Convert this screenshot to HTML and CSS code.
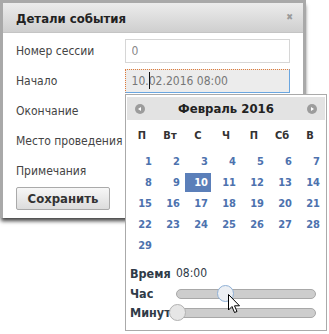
FILE: index.html
```html
<!DOCTYPE html>
<html lang="ru">
<head>
    <meta charset="UTF-8">
    <title>Детали события</title>
    <link rel="stylesheet" href="styles.css">
</head>
<body>
    <div class="page">
        <div class="dialog">
            <div class="dialog-title">
                <span>Детали события</span>
                <span class="close">&#10006;</span>
            </div>
            <div class="dialog-body">
                <div class="row"><label>Номер сессии</label><input type="text" value="0"></div>
                <div class="row"><label>Начало</label><input type="text" class="focused" value="10.02.2016 08:00"><span class="caret"></span></div>
                <div class="row"><label>Окончание</label><input type="text"></div>
                <div class="row"><label>Место проведения</label><input type="text"></div>
                <div class="row"><label>Примечания</label><input type="text"></div>
                <button class="save">Сохранить</button>
            </div>
        </div>

        <div class="datepicker">
            <div class="dp-header">
                <span class="dp-nav"></span>
                <span class="dp-title">Февраль 2016</span>
                <span class="dp-nav next"></span>
            </div>
            <table class="dp-table">
                <thead>
                    <tr><th>П</th><th>Вт</th><th>С</th><th>Ч</th><th>П</th><th>Сб</th><th>В</th></tr>
                </thead>
                <tbody>
                    <tr><td><a>1</a></td><td><a>2</a></td><td><a>3</a></td><td><a>4</a></td><td><a>5</a></td><td><a>6</a></td><td><a>7</a></td></tr>
                    <tr><td><a>8</a></td><td><a>9</a></td><td><a class="active">10</a></td><td><a>11</a></td><td><a>12</a></td><td><a>13</a></td><td><a>14</a></td></tr>
                    <tr><td><a>15</a></td><td><a>16</a></td><td><a>17</a></td><td><a>18</a></td><td><a>19</a></td><td><a>20</a></td><td><a>21</a></td></tr>
                    <tr><td><a>22</a></td><td><a>23</a></td><td><a>24</a></td><td><a>25</a></td><td><a>26</a></td><td><a>27</a></td><td><a>28</a></td></tr>
                    <tr><td><a>29</a></td><td></td><td></td><td></td><td></td><td></td><td></td></tr>
                </tbody>
            </table>
            <div class="dp-time">
                <div class="time-row"><b>Время</b><span>08:00</span></div>
                <div class="time-row"><b>Час</b><div class="slider"><span class="handle hover" style="left: 34.8%"></span></div></div>
                <div class="time-row"><b>Минута</b><div class="slider"><span class="handle" style="left: 0%"></span></div></div>
            </div>
            <svg class="cursor" width="13" height="21" viewBox="0 0 13 21">
                <path d="M0.5 0.5 L0.5 16 L4 12.5 L6.5 18.5 L9 17.5 L6.5 11.8 L11.5 11.8 Z" fill="#fff" stroke="#000" stroke-width="1"/>
            </svg>
        </div>
    </div>
</body>
</html>
```

FILE: styles.css
```css
* {
    box-sizing: border-box;
    margin: 0;
    padding: 0;
}

body {
    background: #fff;
    font-family: "DejaVu Sans Condensed", "DejaVu Sans", sans-serif;
    font-size: 12px;
    color: #333;
}

.page {
    position: relative;
    width: 329px;
    height: 334px;
    overflow: hidden;
}

.dialog {
    position: relative;
    width: 306px;
    border: 3px solid #a9a9a9;
    border-bottom: 0;
    background: #fff;
    box-shadow: 0 4px 4px -1px rgba(0, 0, 0, 0.75);
}

.dialog-title {
    height: 30px;
    display: flex;
    align-items: center;
    justify-content: space-between;
    padding: 2px 10px 0 13px;
    background: linear-gradient(#ececec, #cfcfcf);
    border-bottom: 1px solid #c4c4c4;
    font-size: 13px;
    font-weight: bold;
    color: #222;
}

.dialog-title .close {
    font-size: 9px;
    color: #9a9a9a;
    margin-top: -4px;
}

.dialog-body {
    padding: 3px 13px 8px 13px;
}

.row {
    position: relative;
    height: 30px;
    display: flex;
    align-items: center;
}

.row label {
    width: 109px;
    color: #444;
}

.row input {
    width: 166px;
    height: 24px;
    border: 1px solid #d6d6d6;
    padding: 0 6px;
    font-family: inherit;
    font-size: 12px;
    color: #888;
    background: #fff;
}

.row input.focused {
    background: #ececec;
    border: 1px dotted #e07b39;
    border-bottom: 1px solid #6aa6e0;
    border-right: 1px solid #6aa6e0;
    color: #777;
}

.caret {
    position: absolute;
    left: 133px;
    top: 6px;
    height: 17px;
    border-left: 1px solid #111;
}

.save {
    margin-top: 1px;
    width: 94px;
    height: 23px;
    border: 1px solid #aaa;
    border-radius: 2px;
    background: linear-gradient(#f7f7f7, #dcdcdc);
    font-family: inherit;
    font-size: 13px;
    font-weight: bold;
    color: #333;
}

/* datepicker popup */
.datepicker {
    position: absolute;
    left: 125px;
    top: 94px;
    width: 202px;
    height: 237px;
    border: 1px solid #aaa;
    background: #fff;
    padding: 2px 1px;
}

.dp-header {
    height: 23px;
    display: flex;
    align-items: center;
    justify-content: space-between;
    padding: 0 8px;
    background: #e3e3e3;
}

.dp-title {
    font-size: 13px;
    font-weight: bold;
    color: #222;
}

.dp-nav {
    width: 10px;
    height: 10px;
    border-radius: 50%;
    background: #9c9c9c;
    position: relative;
}

.dp-nav::after {
    content: "";
    position: absolute;
    top: 3px;
    left: 3px;
    border-top: 2px solid transparent;
    border-bottom: 2px solid transparent;
    border-right: 3px solid #fff;
}

.dp-nav.next::after {
    left: 4px;
    border-right: 0;
    border-left: 3px solid #fff;
}

.dp-table {
    border-collapse: collapse;
    width: 196px;
    margin-left: 1px;
}

.dp-table th {
    height: 31px;
    font-size: 11px;
    font-weight: bold;
    color: #333;
    text-align: center;
}

.dp-table td {
    width: 28px;
    padding: 1px;
}

.dp-table td a {
    display: block;
    height: 19px;
    line-height: 19px;
    padding-right: 3px;
    text-align: right;
    font-size: 11px;
    font-weight: bold;
    color: #4d72ae;
}

.dp-table td a.active {
    background: #5b7fb9;
    color: #fff;
}

.dp-time {
    padding: 6px 0 0 3px;
}

.time-row {
    display: flex;
    align-items: center;
    height: 19px;
    color: #2f3b48;
}

.time-row b {
    width: 46px;
    font-size: 12.5px;
    flex-shrink: 0;
    white-space: nowrap;
}

.time-row span {
    font-size: 12px;
}

.time-row:first-child {
    height: 22px;
}

.slider {
    position: relative;
    width: 140px;
    height: 10px;
    border: 1px solid #a8a8a8;
    border-radius: 5px;
    background: #cdcdcd;
}

.handle {
    position: absolute;
    top: -5px;
    width: 17px;
    height: 17px;
    margin-left: -8px;
    border: 1px solid #b2b2b2;
    border-radius: 50%;
    background: #e6e6e6;
}

.handle.hover {
    border-color: #8fb0d6;
    background: #eceff3;
}

.cursor {
    position: absolute;
    left: 102px;
    top: 199px;
}
```
